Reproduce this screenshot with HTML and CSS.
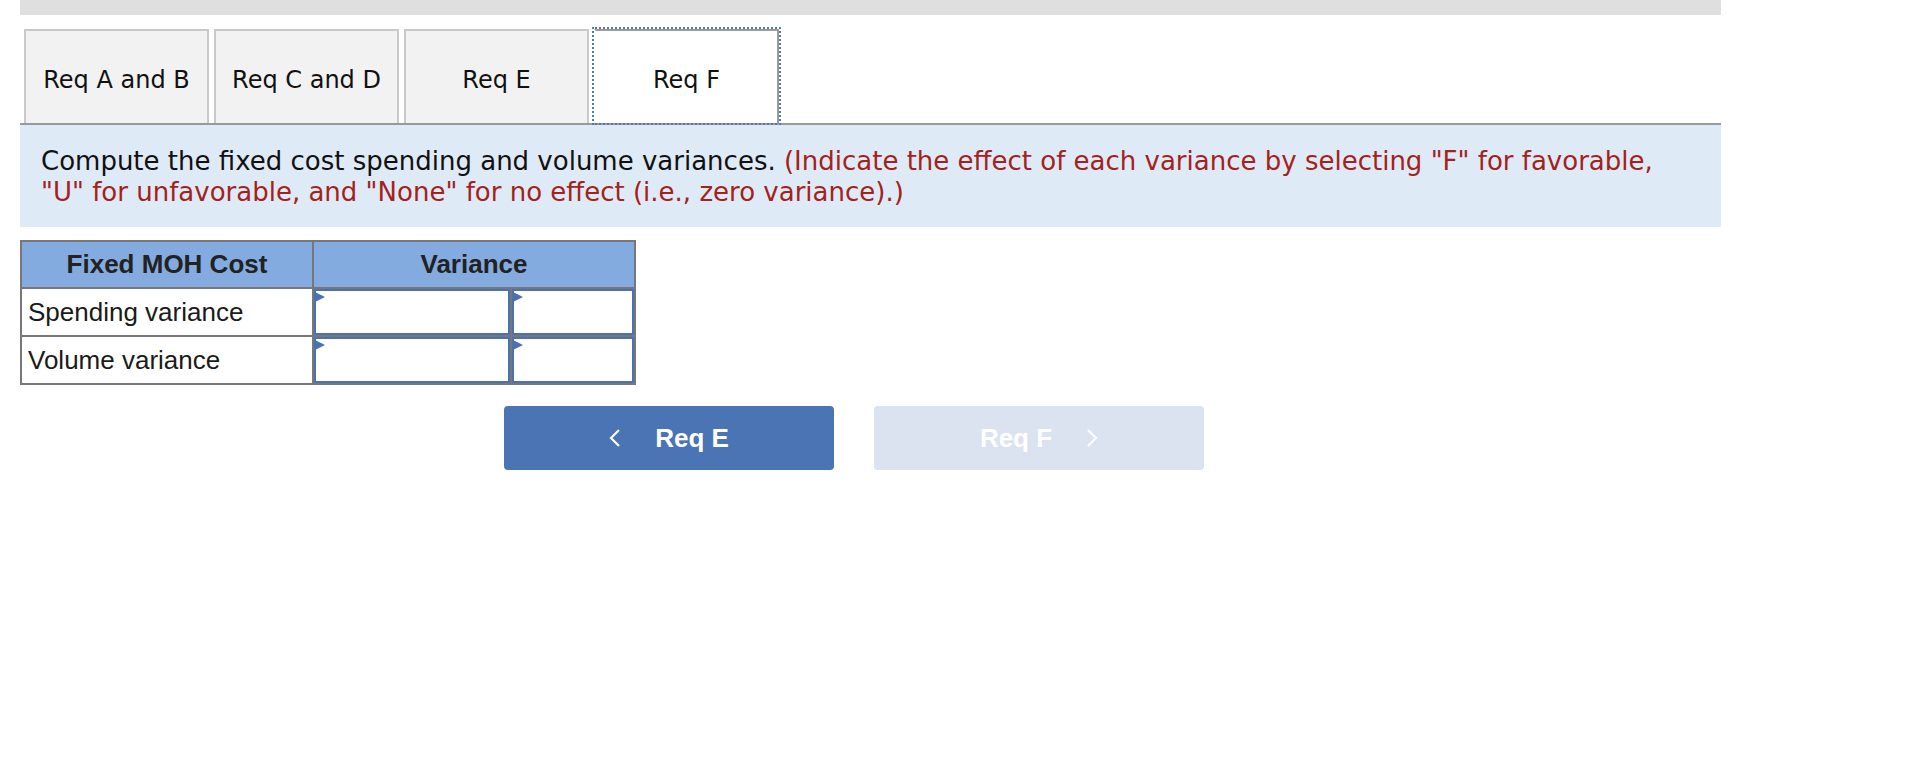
FILE: index.html
```html
<!DOCTYPE html>
<html lang="en">
<head>
    <meta charset="UTF-8">
    <meta name="viewport" content="width=device-width, initial-scale=1.0">
    <title>Req F</title>
    <link rel="stylesheet" href="styles.css">
</head>
<body>
    <div class="page">
        <div class="topbar"></div>

        <div class="tabs">
            <button class="tab">Req A and B</button>
            <button class="tab">Req C and D</button>
            <button class="tab">Req E</button>
            <button class="tab active">Req F</button>
        </div>

        <div class="prompt">
            <span>Compute the fixed cost spending and volume variances.</span>
            <span class="note">(Indicate the effect of each variance by selecting "F" for favorable, "U" for unfavorable, and "None" for no effect (i.e., zero variance).)</span>
        </div>

        <table class="grid">
            <tr>
                <th class="col-label">Fixed MOH Cost</th>
                <th colspan="2">Variance</th>
            </tr>
            <tr>
                <td class="label">Spending variance</td>
                <td class="cell wide"><div class="field"></div></td>
                <td class="cell narrow"><div class="field"></div></td>
            </tr>
            <tr>
                <td class="label">Volume variance</td>
                <td class="cell wide"><div class="field"></div></td>
                <td class="cell narrow"><div class="field"></div></td>
            </tr>
        </table>

        <div class="nav">
            <button class="nav-btn prev">
                <svg width="12" height="18" viewBox="0 0 12 18"><polyline points="10,1 2,9 10,17" fill="none" stroke="#fff" stroke-width="2.2"/></svg>
                <span>Req E</span>
            </button>
            <button class="nav-btn next" disabled>
                <span>Req F</span>
                <svg width="12" height="18" viewBox="0 0 12 18"><polyline points="2,1 10,9 2,17" fill="none" stroke="#fff" stroke-width="2.2"/></svg>
            </button>
        </div>
    </div>
</body>
</html>
```

FILE: styles.css
```css
body {
    margin: 0;
    background: #fff;
    font-family: "DejaVu Sans", Verdana, sans-serif;
    color: #111;
}
.page {
    margin-left: 20px;
    width: 1701px;
}
.topbar {
    height: 15px;
    background: #dfdfdf;
}
.tabs {
    display: flex;
    gap: 5px;
    margin-top: 14px;
    padding-left: 4px;
    height: 94px;
}
.tab {
    width: 185px;
    height: 94px;
    border: 2px solid #c9c9c9;
    border-bottom: none;
    background: #f2f2f2;
    font-family: "DejaVu Sans", Verdana, sans-serif;
    font-size: 24px;
    color: #111;
    padding: 5px 0 0;
    cursor: pointer;
}
.tab.active {
    background: #fff;
    border-color: #9a9a9a;
    border-left-color: #fff;
    outline: 2px dotted #4a7bc4;
}
.prompt {
    border-top: 2px solid #999;
    background: #dfeaf7;
    padding: 21px 60px 19px 21px;
    font-size: 26px;
    line-height: 31px;
}
.note {
    color: #a3221c;
}
.grid {
    margin-top: 13px;
    border-collapse: separate;
    border-spacing: 0;
    border: 2px solid #777;
    font-family: "Liberation Sans", Arial, sans-serif;
    font-size: 26px;
}
.grid th {
    background: #84abe0;
    color: #222;
    font-weight: bold;
    height: 45px;
    padding: 0;
}
.grid th + th,
.grid td + td {
    border-left: 2px solid #777;
}
.grid tr + tr td {
    border-top: 2px solid #777;
}
.grid .col-label {
    width: 290px;
}
.grid td {
    padding: 0;
    height: 46px;
}
.grid .label {
    padding: 0 6px;
    color: #1a1a1a;
}
.grid .wide {
    width: 196px;
}
.grid .narrow {
    width: 122px;
}
.field {
    position: relative;
    height: 46px;
    box-sizing: border-box;
    border: 2px solid #4a72b2;
    background: #fff;
}
.field::before {
    content: "";
    position: absolute;
    top: 1px;
    left: -1px;
    border-left: 10px solid #4a72b2;
    border-top: 5px solid transparent;
    border-bottom: 5px solid transparent;
}
.nav {
    display: flex;
    gap: 40px;
    margin-top: 21px;
    padding-left: 484px;
}
.nav-btn {
    width: 330px;
    height: 64px;
    border: none;
    border-radius: 4px;
    display: flex;
    justify-content: center;
    align-items: center;
    gap: 34px;
    font-family: "Liberation Sans", Arial, sans-serif;
    font-weight: bold;
    font-size: 26px;
    color: #fff;
    padding: 0;
}
.prev {
    background: #4a74b3;
    cursor: pointer;
}
.next {
    background: #dae3ef;
}
```
